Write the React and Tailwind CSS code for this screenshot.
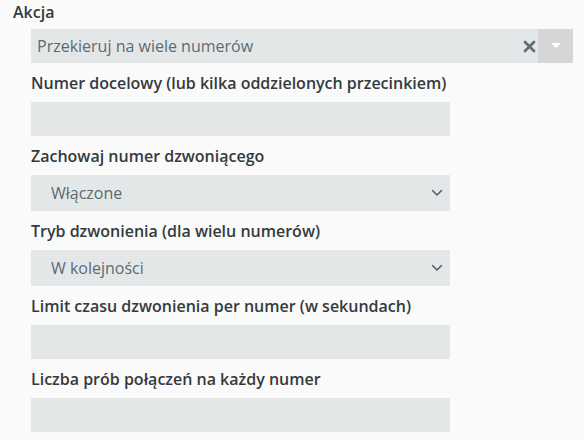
import React from 'react'

const Chevron = () => (
  <svg width="12" height="8" viewBox="0 0 12 8" fill="none" className="shrink-0">
    <path d="M1.5 1.5L6 6L10.5 1.5" stroke="#4f5f66" strokeWidth="1.5" strokeLinecap="round" strokeLinejoin="round" />
  </svg>
)

const Label = ({ children }) => (
  <div className="mt-[9px] mb-[8px] text-[16px] leading-[22px] font-semibold text-[#343a3d]">{children}</div>
)

const TextInput = () => (
  <div className="h-[34px] w-[419px] bg-[#e4e7e8]"></div>
)

const Select = ({ value }) => (
  <div className="h-[36px] w-[419px] bg-[#e4e7e8] flex items-center justify-between pl-[20px] pr-[7px] text-[16px] text-[#5b6b72]">
    <span>{value}</span>
    <Chevron />
  </div>
)

export default function App() {
  return (
    <div className="min-h-screen w-[584px] bg-[#fafafa] pl-[13px]" style={{ fontFamily: '"Open Sans", sans-serif' }}>
      <div className="text-[16px] leading-[24px] font-semibold text-[#343a3d] mb-[5px]">Akcja</div>
      <div className="pl-[18px]">
        <div className="h-[34px] w-[542px] flex bg-[#e4e7e8]">
          <div className="flex-1 flex items-center pl-[6px] text-[16px] text-[#5b6b72]">Przekieruj na wiele numerów</div>
          <div className="w-[17px] flex items-center justify-center">
            <svg width="13" height="13" viewBox="0 0 13 13">
              <path d="M2 2L11 11M11 2L2 11" stroke="#5f7178" strokeWidth="2.8" strokeLinecap="round" />
            </svg>
          </div>
          <div className="w-[35px] bg-[#d4d6d7] flex items-center justify-center">
            <svg width="10" height="6" viewBox="0 0 10 6">
              <path d="M0 0H10L5 5Z" fill="#ffffff" />
            </svg>
          </div>
        </div>
        <Label>Numer docelowy (lub kilka oddzielonych przecinkiem)</Label>
        <TextInput />
        <Label>Zachowaj numer dzwoniącego</Label>
        <Select value="Włączone" />
        <Label>Tryb dzwonienia (dla wielu numerów)</Label>
        <Select value="W kolejności" />
        <Label>Limit czasu dzwonienia per numer (w sekundach)</Label>
        <TextInput />
        <Label>Liczba prób połączeń na każdy numer</Label>
        <TextInput />
      </div>
    </div>
  )
}
